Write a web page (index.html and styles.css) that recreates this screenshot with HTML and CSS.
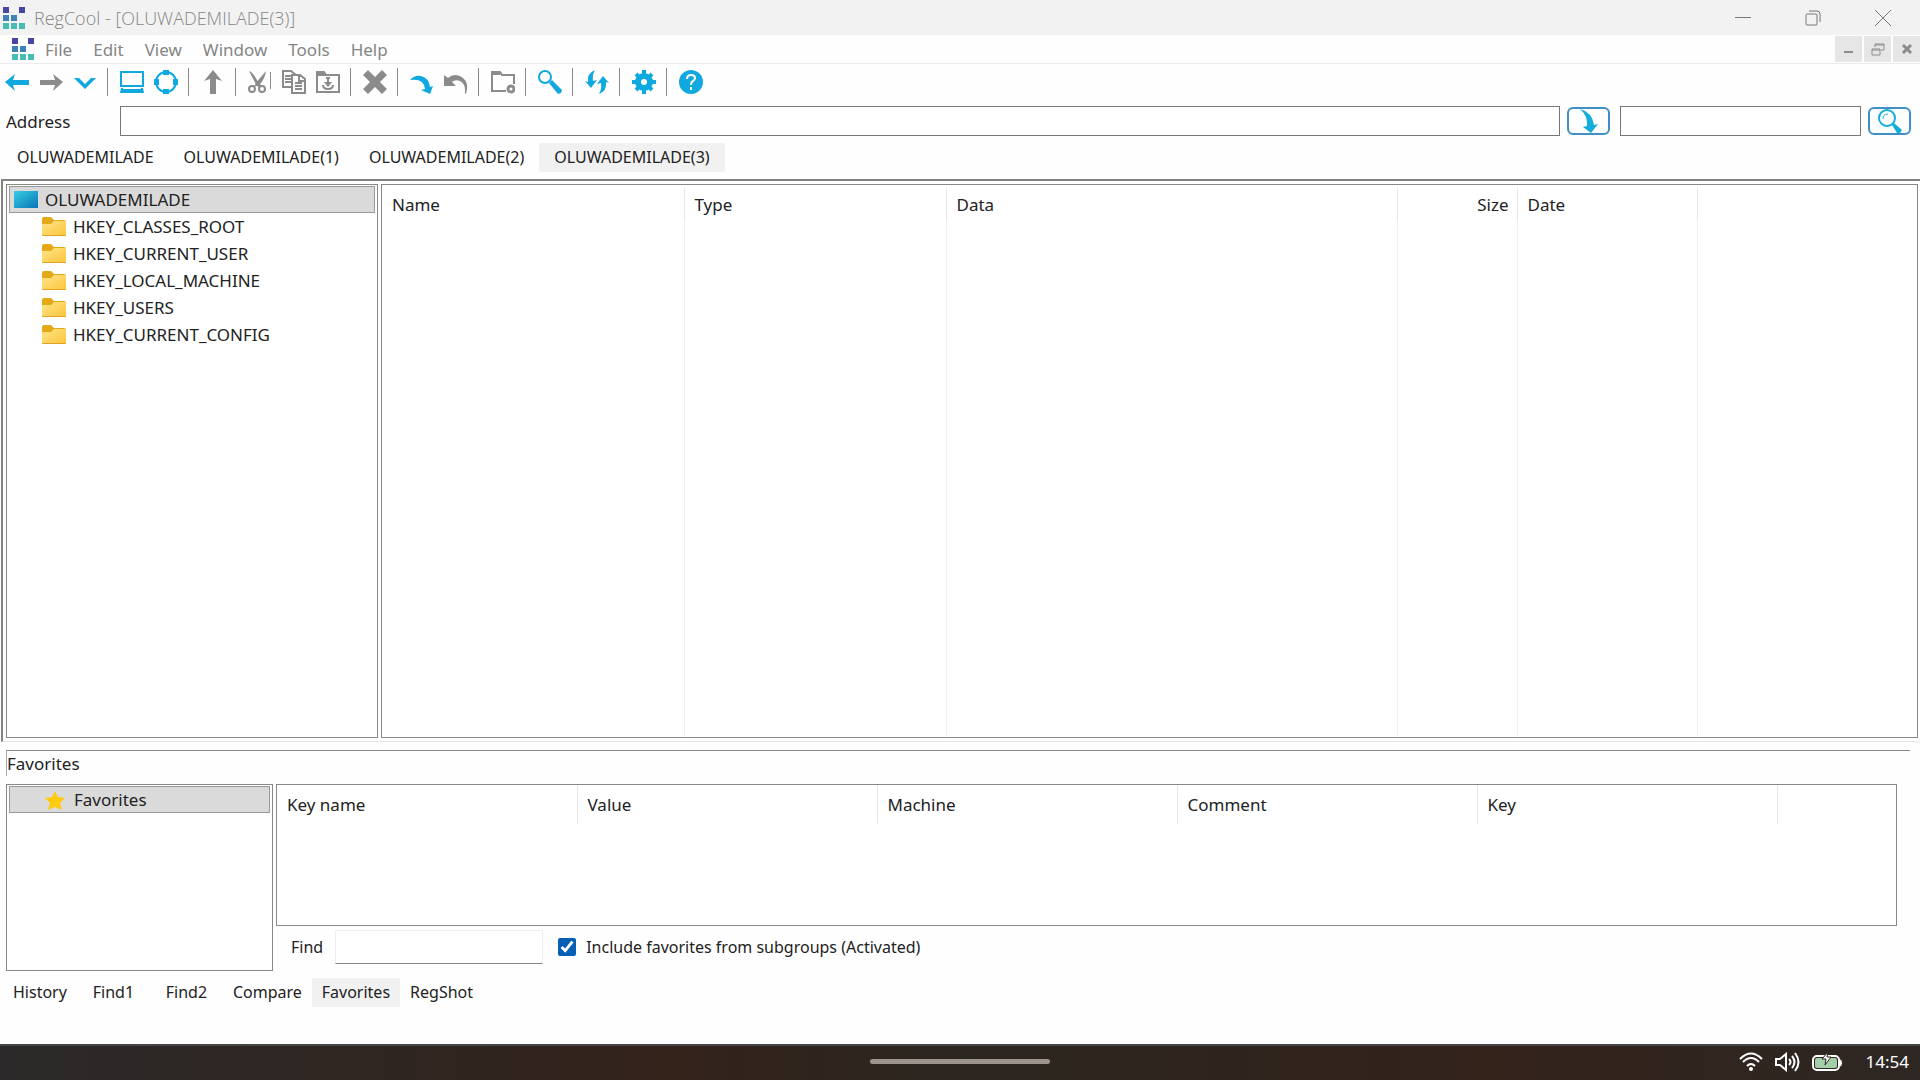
FILE: index.html
```html
<!DOCTYPE html>
<html lang="en">
<head>
    <meta charset="UTF-8">
    <meta name="viewport" content="width=device-width, initial-scale=1.0">
    <title>RegCool - [OLUWADEMILADE(3)]</title>
    <link rel="stylesheet" href="styles.css">
</head>
<body>

<!-- Shared icons -->
<svg class="sprite" aria-hidden="true">
    <defs>
        <linearGradient id="folderFill" x1="0" y1="0" x2="1" y2="1">
            <stop offset="0" stop-color="#ffe48a"/>
            <stop offset="1" stop-color="#fbc53a"/>
        </linearGradient>
        <linearGradient id="screenFill" x1="0" y1="0" x2="1" y2="1">
            <stop offset="0" stop-color="#35cfe0"/>
            <stop offset="1" stop-color="#0a72b8"/>
        </linearGradient>
    </defs>
    <symbol id="logo" viewBox="0 0 22 22">
        <path fill="#4747a3" d="M0 0h6v6H0zM16 0h6v6h-6z"/>
        <path fill="#3d83b8" d="M0 8h6v6H0zM8 8h6v6H8z"/>
        <path fill="#48bdb4" d="M0 16h6v6H0zM8 16h6v6H8zM16 16h6v6h-6z"/>
    </symbol>
    <symbol id="folder" viewBox="0 0 24 20">
        <path fill="#e3a917" d="M0 2q0-2 2-2h7l3 3h10q2 0 2 2v6H0z"/>
        <path fill="url(#folderFill)" d="M0 7h9l3-3h12v14q0 1-1 1H1q-1 0-1-1z"/>
        <path fill="#e0a422" d="M0 18h24q0 1-1 1H1q-1 0-1-1z"/>
    </symbol>
</svg>

<header class="titlebar">
    <svg class="logo"><use href="#logo"/></svg>
    <h1 class="title">RegCool - [OLUWADEMILADE(3)]</h1>
    <button class="win-button" aria-label="Minimize">
        <svg width="18" height="18" viewBox="0 0 18 18"><path d="M1 8.500h16"/></svg>
    </button>
    <button class="win-button" aria-label="Restore">
        <svg width="18" height="18" viewBox="0 0 18 18"><rect x="2" y="5" width="11" height="11" rx="1"/><path d="M5 2h8q3 0 3 3v8"/></svg>
    </button>
    <button class="win-button" aria-label="Close">
        <svg width="18" height="18" viewBox="0 0 18 18"><path d="M1 1l16 16M17 1L1 17"/></svg>
    </button>
</header>

<nav class="menubar">
    <svg class="logo"><use href="#logo"/></svg>
    <a href="#">File</a>
    <a href="#">Edit</a>
    <a href="#">View</a>
    <a href="#">Window</a>
    <a href="#">Tools</a>
    <a href="#">Help</a>
    <div class="mdi-buttons">
        <button aria-label="Minimize document"><svg width="14" height="14" viewBox="0 0 14 14"><path d="M2 10h9" stroke-width="2"/></svg></button>
        <button aria-label="Restore document"><svg width="14" height="14" viewBox="0 0 14 14"><path d="M1 7h8v6H1zM1 8h8M4 5V2h9v6h-3M4 3h9"/></svg></button>
        <button aria-label="Close document"><svg width="14" height="14" viewBox="0 0 14 14"><path d="M3 3l8 8M11 3l-8 8" stroke-width="3"/></svg></button>
    </div>
</nav>

<div class="toolbar">
    <button class="blue" aria-label="Back"><svg viewBox="0 0 24 24"><path d="M0 12l10-8-2 6h16v5H8l2 6z"/></svg></button>
    <button aria-label="Forward"><svg viewBox="0 0 24 24"><path d="M24 12L14 4l2 6H1v5h15l-2 6z"/></svg></button>
    <button class="blue" aria-label="History"><svg viewBox="0 0 24 24"><path d="M1 8h5l6 6 6-6h5L12 19z"/></svg></button>
    <span class="separator"></span>
    <button class="blue" aria-label="Computer"><svg viewBox="0 0 24 24"><path fill-rule="evenodd" d="M0 1h24v16H0zM2 3v12h20V3zM1 18h22l1 5H0zM3 18v1h18v-1z"/></svg></button>
    <button class="blue" aria-label="Target"><svg viewBox="0 0 24 24"><circle class="line dashed" cx="12" cy="12" r="10" stroke-width="2"/><path d="M9 0h6v5H9zM9 19h6v5H9zM0 9h5v6H0zM19 9h5v6h-5z"/></svg></button>
    <span class="separator"></span>
    <button aria-label="Up"><svg viewBox="0 0 24 24"><path d="M12 0l9 11-6-2v15H9V9l-6 2z"/></svg></button>
    <span class="separator"></span>
    <button aria-label="Cut"><svg viewBox="0 0 24 24"><path d="M1 1q4 1 9 11l-1 4zM18 1q-1 9-8 15l-3-2z"/><circle class="line" cx="4" cy="19" r="3" stroke-width="2"/><circle class="line" cx="14" cy="19" r="3" stroke-width="2"/><path d="M6 16l4-4 4 4-3 1-2-1zM22 2h1v17h-1z"/></svg></button>
    <button aria-label="Copy"><svg viewBox="0 0 24 24"><path class="line" stroke-width="2" d="M9 17H1V1h8l5 4M3 6h6M3 9h6M3 12h6M10 5h8l5 4v14H10zM17 6v5h5M13 13h7M13 16h7M13 19h7"/></svg></button>
    <button aria-label="Paste"><svg viewBox="0 0 24 24"><path class="line" stroke-width="2" d="M1 22V2h7l2 3h13v17zM7 15q0 4 5 4t5-4M12 9v7"/><path d="M1 2h7l2 4H1zM8 12l4 5 4-5zM10 7h4v2h-4z"/></svg></button>
    <span class="separator"></span>
    <button aria-label="Delete"><svg viewBox="0 0 24 24"><path d="M5 0l7 7 7-7 5 5-7 7 7 7-5 5-7-7-7 7-5-5 7-7-7-7z"/></svg></button>
    <span class="separator"></span>
    <button class="blue" aria-label="Redo"><svg viewBox="0 0 24 24"><path d="M0 10Q5 5 11 6q8 2 9 11l3-1-3 8-9-4 4-1Q14 8 0 10z"/></svg></button>
    <button aria-label="Undo"><svg viewBox="0 0 24 24"><path d="M0 5l4 3Q9 3 16 6q10 5 6 18-1 0-1-1 1-9-5-12-5-2-8 1l4 4H0z"/></svg></button>
    <span class="separator"></span>
    <button aria-label="New key"><svg viewBox="0 0 24 24"><path class="line" stroke-width="2" d="M15 21H1V2h8l2 3h12v9"/><path d="M1 1h8v4H1z"/><circle class="line" cx="20" cy="19" r="3" stroke-width="3"/></svg></button>
    <span class="separator"></span>
    <button class="blue" aria-label="Search"><svg viewBox="0 0 24 24"><circle class="line" cx="7" cy="7" r="6" stroke-width="2"/><path d="M11 13l3-3 10 10-1 3-3 1z"/></svg></button>
    <span class="separator"></span>
    <button class="blue" aria-label="Refresh"><svg viewBox="0 0 24 24"><path d="M10 0Q7 5 8 11l4-1-6 8-6-7 3 1Q2 3 10 0zM14 24q3-5 2-11l-4 1 6-8 6 7-3-1q1 9-7 12z"/></svg></button>
    <span class="separator"></span>
    <button class="blue" aria-label="Settings"><svg viewBox="0 0 24 24"><circle class="line" cx="12" cy="12" r="6" stroke-width="6"/><path class="line" stroke-width="4" d="M12 0v5M12 19v5M0 12h5M19 12h5M4 4l3 3M17 17l3 3M20 4l-3 3M7 17l-3 3"/></svg></button>
    <span class="separator"></span>
    <button class="blue" aria-label="Help"><svg viewBox="0 0 24 24"><circle cx="12" cy="12" r="12"/><path fill="none" stroke="#fff" stroke-width="2" d="M8 9q0-4 4-4t4 3q0 2-2 3-2 1-2 4M12 17v3"/></svg></button>
</div>

<div class="address-row">
    <label for="address">Address</label>
    <input id="address" class="address-input" type="text">
    <button aria-label="Go"><svg viewBox="0 0 24 24"><path d="M3 0q12 3 14 16l4-1-7 9-8-6 4-1Q11 7 3 0z"/></svg></button>
    <input class="search-input" type="text" aria-label="Search">
    <button aria-label="Search"><svg viewBox="0 0 24 24"><circle class="line" cx="9" cy="9" r="8" stroke-width="2"/><path class="line" d="M5 10q0-5 5-5"/><path d="M14 16l2-2 8 7-2 3h-3z"/></svg></button>
</div>

<nav class="tabs">
    <a href="#">OLUWADEMILADE</a>
    <a href="#">OLUWADEMILADE(1)</a>
    <a href="#">OLUWADEMILADE(2)</a>
    <a href="#" class="active">OLUWADEMILADE(3)</a>
</nav>

<main class="workspace">
    <div class="panel tree">
        <div class="tree-row selected">
            <svg class="screen" viewBox="0 0 24 17"><path fill="url(#screenFill)" d="M0 0h24v17H0z"/></svg>
            OLUWADEMILADE
        </div>
        <div class="tree-row child"><svg class="folder"><use href="#folder"/></svg>HKEY_CLASSES_ROOT</div>
        <div class="tree-row child"><svg class="folder"><use href="#folder"/></svg>HKEY_CURRENT_USER</div>
        <div class="tree-row child"><svg class="folder"><use href="#folder"/></svg>HKEY_LOCAL_MACHINE</div>
        <div class="tree-row child"><svg class="folder"><use href="#folder"/></svg>HKEY_USERS</div>
        <div class="tree-row child"><svg class="folder"><use href="#folder"/></svg>HKEY_CURRENT_CONFIG</div>
    </div>
    <div class="panel list">
        <table class="values">
            <thead>
                <tr>
                    <th class="col-name">Name</th>
                    <th class="col-type">Type</th>
                    <th class="col-data">Data</th>
                    <th class="col-size">Size</th>
                    <th class="col-date">Date</th>
                    <td></td>
                </tr>
            </thead>
            <tbody>
                <tr><td></td><td></td><td></td><td></td><td></td><td></td></tr>
            </tbody>
        </table>
    </div>
</main>

<section class="bottom">
    <h2 class="bottom-title">Favorites</h2>
    <div class="favorites">
        <div class="panel groups">
            <div class="tree-row selected child">
                <svg class="star" viewBox="0 0 24 24"><path fill="#ffcb0f" d="M12 3l3 6 7 1-5 5 2 7-7-3-7 3 2-7-5-5 7-1z"/></svg>
                Favorites
            </div>
        </div>
        <div class="favorites-main">
            <div class="panel favorites-list">
                <table>
                    <thead>
                        <tr>
                            <th>Key name</th>
                            <th>Value</th>
                            <th>Machine</th>
                            <th>Comment</th>
                            <th>Key</th>
                            <td></td>
                        </tr>
                    </thead>
                </table>
            </div>
            <div class="find-row">
                <label for="find">Find</label>
                <input id="find" class="find-input" type="text">
                <input id="subgroups" class="check" type="checkbox" checked>
                <label for="subgroups">Include favorites from subgroups (Activated)</label>
            </div>
        </div>
    </div>
    <nav class="bottom-tabs">
        <a href="#">History</a>
        <a href="#">Find1</a>
        <a href="#">Find2</a>
        <a href="#">Compare</a>
        <a href="#" class="active">Favorites</a>
        <a href="#">RegShot</a>
    </nav>
</section>

<footer class="taskbar">
    <span class="handle"></span>
    <div class="tray">
        <svg width="24" height="20" viewBox="0 0 24 20"><path d="M1 7q11-11 22 0M4 10q8-8 16 0M8 14q4-4 8 0"/><circle cx="12" cy="17" r="2" fill="#fff" stroke="none"/></svg>
        <svg width="25" height="20" viewBox="0 0 25 20"><path d="M1 7v6h4l6 5V2L5 7zM14 7q3 3 0 6M17 4q5 6 0 12M20 1q7 9 0 18"/></svg>
        <svg width="30" height="20" viewBox="0 0 30 20"><rect x="1" y="4" width="26" height="14" rx="4"/><rect x="3" y="6" width="22" height="10" rx="2" fill="#a3cfa8" stroke="none"/><path d="M28 8q2 3 0 6"/><path fill="#fff" stroke="#2d2622" stroke-width="1" d="M16 0L10 7h4l-1 6 6-8h-4z"/></svg>
        <span class="clock">14:54</span>
    </div>
</footer>

</body>
</html>
```
FILE: styles.css
```css
* {
    box-sizing: border-box;
}

body {
    display: flex;
    flex-direction: column;
    min-height: 100vh;
    margin: 0;
    background-color: #fefefe;
    color: #222;
    font-family: "Noto Sans", "Open Sans", sans-serif;
    font-size: 17px;
}

a {
    color: inherit;
    text-decoration: none;
}

button {
    display: flex;
    align-items: center;
    justify-content: center;
    padding: 0;
    border: none;
    background: none;
}

.sprite {
    position: absolute;
    width: 0;
    height: 0;
}

.logo {
    width: 22px;
    height: 22px;
}

/* Title bar */
.titlebar {
    display: flex;
    align-items: center;
    height: 35px;
    padding: 0 2px 0 3px;
    background-color: #f2f2f2;
    color: #868686;
}

.title {
    flex: 1;
    margin: 0 0 0 9px;
    font-family: "Open Sans", sans-serif;
    font-size: 18px;
    font-weight: 300;
}

.win-button {
    width: 70px;
    height: 35px;
}

.win-button svg {
    fill: none;
    stroke: #777;
}

/* Menu */
.menubar {
    display: flex;
    align-items: center;
    gap: 21px;
    height: 29px;
    padding-left: 12px;
    border-bottom: 1px solid #ebebeb;
    color: #858585;
}

.menubar .logo {
    margin-right: -10px;
}

.mdi-buttons {
    display: flex;
    gap: 2px;
    margin-left: auto;
}

.mdi-buttons button {
    width: 27px;
    height: 26px;
    background-color: #e6e6e6;
}

.mdi-buttons svg {
    fill: none;
    stroke: #8c8c8c;
}

/* Toolbar */
.toolbar {
    display: flex;
    align-items: center;
    height: 36px;
    color: #8b8b8b;
}

.toolbar button {
    width: 34px;
    height: 32px;
    color: inherit;
}

.toolbar .blue {
    color: #0fa9df;
}

.toolbar svg,
.address-row svg {
    width: 24px;
    height: 24px;
    fill: currentColor;
}

.toolbar .line,
.address-row .line {
    fill: none;
    stroke: currentColor;
}

.separator {
    width: 1px;
    height: 28px;
    margin: 0 7px 0 5px;
    background-color: #888;
}

/* Address */
.address-row {
    display: flex;
    align-items: center;
    gap: 7px;
    padding: 6px 9px 7px 6px;
}

.address-row label {
    width: 107px;
}

.address-row input {
    height: 30px;
    border: 1px solid #777;
    background-color: #fff;
}

.address-input {
    flex: 1;
}

.search-input {
    width: 241px;
    margin-left: 3px;
}

.address-row button {
    width: 43px;
    height: 28px;
    border: 2px solid #3f8fc6;
    border-radius: 6px;
    color: #12addb;
}

/* Tabs */
.tabs,
.bottom-tabs {
    display: flex;
    font-size: 16px;
    line-height: 29px;
}

.tabs {
    padding: 0 0 7px 2px;
}

.tabs a {
    padding: 0 15px;
}

.tabs .active,
.bottom-tabs .active {
    background-color: #f1f1f1;
}

/* Workspace */
.workspace {
    display: flex;
    flex: 1;
    gap: 3px;
    margin-left: 1px;
    padding: 3px 2px 3px 3px;
    border-top: 2px solid #828282;
    border-left: 2px solid #828282;
    border-bottom: 1px solid #e6e6e6;
}

.panel {
    border: 1px solid #888;
    background-color: #fff;
}

.tree {
    width: 372px;
    padding: 1px 2px;
}

.tree-row {
    display: flex;
    align-items: center;
    gap: 7px;
    height: 27px;
    padding-left: 4px;
}

.tree-row.child {
    padding-left: 33px;
}

.tree-row.selected {
    border: 1px solid #999;
    background-color: #dadada;
}

.folder {
    width: 24px;
    height: 20px;
}

.screen {
    width: 24px;
    height: 17px;
}

.star {
    width: 24px;
    height: 24px;
}

.list {
    flex: 1;
    padding-top: 3px;
}

table {
    width: 100%;
    border-collapse: collapse;
    table-layout: fixed;
}

th {
    padding: 0 8px 0 10px;
    border-right: 1px solid #e6e6e6;
    font-weight: normal;
    text-align: left;
}

.values {
    height: 100%;
}

.values th {
    height: 32px;
}

.values td {
    border-right: 1px solid #f0f0f0;
}

.values td:last-child {
    border-right: none;
}

.col-name {
    width: 302px;
}

.col-type {
    width: 262px;
}

.col-data {
    width: 451px;
}

.col-size {
    width: 120px;
    text-align: right;
}

.col-date {
    width: 180px;
}

/* Favorites */
.bottom {
    padding: 8px 10px 37px 6px;
}

.bottom-title {
    margin: 0 0 8px;
    border-top: 1px solid #888;
    border-left: 1px solid #aaa;
    font-size: 17px;
    font-weight: normal;
    line-height: 25px;
}

.favorites {
    display: flex;
    gap: 3px;
    margin-right: 13px;
}

.groups {
    width: 267px;
    padding: 1px 2px;
}

.favorites-main {
    flex: 1;
}

.favorites-list {
    height: 142px;
}

.favorites-list th {
    width: 300px;
    height: 39px;
}

.find-row {
    display: flex;
    align-items: center;
    padding: 4px 0 7px 15px;
    font-size: 16px;
}

.find-input {
    width: 208px;
    height: 34px;
    margin: 0 15px 0 12px;
    border: 1px solid #eee;
    border-bottom: 1px solid #888;
    background-color: #fff;
}

.check {
    width: 18px;
    height: 18px;
    margin: 0 10px 0 0;
    accent-color: #0560b5;
}

.bottom-tabs {
    margin: 7px 0 0 -3px;
}

.bottom-tabs a {
    min-width: 73px;
    padding: 0 10px;
    text-align: center;
}

/* Taskbar */
.taskbar {
    display: grid;
    grid-template-columns: 1fr 180px 1fr;
    align-items: center;
    height: 36px;
    padding-bottom: 3px;
    border-top: 2px solid #454545;
    background: linear-gradient(90deg, #2b2929, #33231b 35%, #2c2620 50%, #33231b 78%, #2e2723);
    color: #fff;
}

.handle {
    grid-column: 2;
    height: 5px;
    border-radius: 3px;
    background-color: #9c948d;
}

.tray {
    display: flex;
    align-items: center;
    justify-content: flex-end;
    gap: 12px;
    padding-right: 11px;
}

.tray svg {
    fill: none;
    stroke: #fff;
    stroke-width: 2;
}

.clock {
    margin-left: 12px;
}
```
